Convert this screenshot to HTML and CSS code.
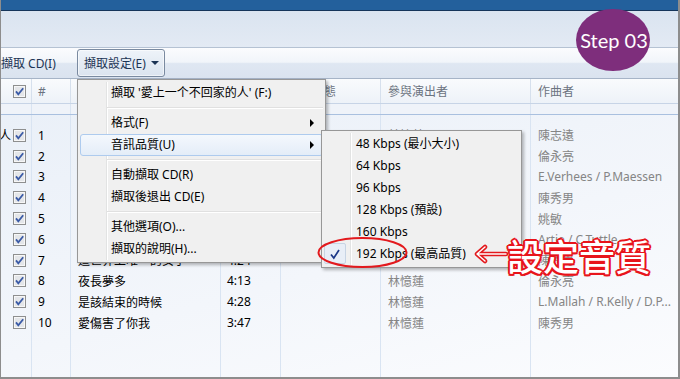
FILE: index.html
```html
<!DOCTYPE html>
<html lang="zh-Hant">
<head>
<meta charset="utf-8">
<title>擷取設定</title>
<link rel="stylesheet" href="styles.css">
</head>
<body>
<div class="app">
  <div class="titlebar"></div>
  <div class="band"></div>
  <div class="toolbar">
    <span class="tb-item">擷取 CD(I)</span>
    <span class="tb-btn"><span>擷取設定(E)</span><span class="caret"></span></span>
  </div>
  <div class="list">
    <div class="row head">
      <div class="c c0"></div>
      <div class="c c1"><svg class="cb" viewBox="0 0 13 13" width="13" height="13"><rect x="0.5" y="0.5" width="12" height="12" fill="#f7f7f7" stroke="#8e8f8f"/><rect x="2" y="2" width="9" height="9" fill="#e4e6e9"/><path d="M3 6.4 L5.3 9.3 L10.2 3.2" fill="none" stroke="#3a5aa6" stroke-width="1.8"/></svg></div>
      <div class="c c2">#</div>
      <div class="c c3">標題</div>
      <div class="c c4">長度</div>
      <div class="c c5">擷取狀態</div>
      <div class="c c6">參與演出者</div>
      <div class="c c7">作曲者</div>
    </div>
    <div class="subhead"></div>
    <div class="body">
      <div class="row"><div class="c c0"><span class="album">人</span></div><div class="c c1"><svg class="cb" viewBox="0 0 13 13" width="13" height="13"><rect x="0.5" y="0.5" width="12" height="12" fill="#f7f7f7" stroke="#8e8f8f"/><rect x="2" y="2" width="9" height="9" fill="#e4e6e9"/><path d="M3 6.4 L5.3 9.3 L10.2 3.2" fill="none" stroke="#3a5aa6" stroke-width="1.8"/></svg></div><div class="c c2">1</div><div class="c c3">愛上一個不回家的人</div><div class="c c4">4:31</div><div class="c c5"></div><div class="c c6 dim">林憶蓮</div><div class="c c7 dim">陳志遠</div></div>
      <div class="row"><div class="c c0"></div><div class="c c1"><svg class="cb" viewBox="0 0 13 13" width="13" height="13"><rect x="0.5" y="0.5" width="12" height="12" fill="#f7f7f7" stroke="#8e8f8f"/><rect x="2" y="2" width="9" height="9" fill="#e4e6e9"/><path d="M3 6.4 L5.3 9.3 L10.2 3.2" fill="none" stroke="#3a5aa6" stroke-width="1.8"/></svg></div><div class="c c2">2</div><div class="c c3">不必在乎我是誰</div><div class="c c4">4:05</div><div class="c c5"></div><div class="c c6 dim">林憶蓮</div><div class="c c7 dim">倫永亮</div></div>
      <div class="row"><div class="c c0"></div><div class="c c1"><svg class="cb" viewBox="0 0 13 13" width="13" height="13"><rect x="0.5" y="0.5" width="12" height="12" fill="#f7f7f7" stroke="#8e8f8f"/><rect x="2" y="2" width="9" height="9" fill="#e4e6e9"/><path d="M3 6.4 L5.3 9.3 L10.2 3.2" fill="none" stroke="#3a5aa6" stroke-width="1.8"/></svg></div><div class="c c2">3</div><div class="c c3">灰色</div><div class="c c4">4:12</div><div class="c c5"></div><div class="c c6 dim">林憶蓮</div><div class="c c7 dim">E.Verhees / P.Maessen</div></div>
      <div class="row"><div class="c c0"></div><div class="c c1"><svg class="cb" viewBox="0 0 13 13" width="13" height="13"><rect x="0.5" y="0.5" width="12" height="12" fill="#f7f7f7" stroke="#8e8f8f"/><rect x="2" y="2" width="9" height="9" fill="#e4e6e9"/><path d="M3 6.4 L5.3 9.3 L10.2 3.2" fill="none" stroke="#3a5aa6" stroke-width="1.8"/></svg></div><div class="c c2">4</div><div class="c c3">為你我受冷風吹</div><div class="c c4">4:40</div><div class="c c5"></div><div class="c c6 dim">林憶蓮</div><div class="c c7 dim">陳秀男</div></div>
      <div class="row"><div class="c c0"></div><div class="c c1"><svg class="cb" viewBox="0 0 13 13" width="13" height="13"><rect x="0.5" y="0.5" width="12" height="12" fill="#f7f7f7" stroke="#8e8f8f"/><rect x="2" y="2" width="9" height="9" fill="#e4e6e9"/><path d="M3 6.4 L5.3 9.3 L10.2 3.2" fill="none" stroke="#3a5aa6" stroke-width="1.8"/></svg></div><div class="c c2">5</div><div class="c c3">不了情</div><div class="c c4">3:58</div><div class="c c5"></div><div class="c c6 dim">林憶蓮</div><div class="c c7 dim">姚敏</div></div>
      <div class="row"><div class="c c0"></div><div class="c c1"><svg class="cb" viewBox="0 0 13 13" width="13" height="13"><rect x="0.5" y="0.5" width="12" height="12" fill="#f7f7f7" stroke="#8e8f8f"/><rect x="2" y="2" width="9" height="9" fill="#e4e6e9"/><path d="M3 6.4 L5.3 9.3 L10.2 3.2" fill="none" stroke="#3a5aa6" stroke-width="1.8"/></svg></div><div class="c c2">6</div><div class="c c3">如果你有一點點愛我</div><div class="c c4">4:19</div><div class="c c5"></div><div class="c c6 dim">林憶蓮</div><div class="c c7 dim">Artie / C.Tuttle</div></div>
      <div class="row"><div class="c c0"></div><div class="c c1"><svg class="cb" viewBox="0 0 13 13" width="13" height="13"><rect x="0.5" y="0.5" width="12" height="12" fill="#f7f7f7" stroke="#8e8f8f"/><rect x="2" y="2" width="9" height="9" fill="#e4e6e9"/><path d="M3 6.4 L5.3 9.3 L10.2 3.2" fill="none" stroke="#3a5aa6" stroke-width="1.8"/></svg></div><div class="c c2">7</div><div class="c c3">這世界上唯一的女子</div><div class="c c4">4:24</div><div class="c c5"></div><div class="c c6 dim">林憶蓮</div><div class="c c7 dim">陳秀男</div></div>
      <div class="row"><div class="c c0"></div><div class="c c1"><svg class="cb" viewBox="0 0 13 13" width="13" height="13"><rect x="0.5" y="0.5" width="12" height="12" fill="#f7f7f7" stroke="#8e8f8f"/><rect x="2" y="2" width="9" height="9" fill="#e4e6e9"/><path d="M3 6.4 L5.3 9.3 L10.2 3.2" fill="none" stroke="#3a5aa6" stroke-width="1.8"/></svg></div><div class="c c2">8</div><div class="c c3">夜長夢多</div><div class="c c4">4:13</div><div class="c c5"></div><div class="c c6 dim">林憶蓮</div><div class="c c7 dim">倫永亮</div></div>
      <div class="row"><div class="c c0"></div><div class="c c1"><svg class="cb" viewBox="0 0 13 13" width="13" height="13"><rect x="0.5" y="0.5" width="12" height="12" fill="#f7f7f7" stroke="#8e8f8f"/><rect x="2" y="2" width="9" height="9" fill="#e4e6e9"/><path d="M3 6.4 L5.3 9.3 L10.2 3.2" fill="none" stroke="#3a5aa6" stroke-width="1.8"/></svg></div><div class="c c2">9</div><div class="c c3">是該結束的時候</div><div class="c c4">4:28</div><div class="c c5"></div><div class="c c6 dim">林憶蓮</div><div class="c c7 dim">L.Mallah / R.Kelly / D.P...</div></div>
      <div class="row"><div class="c c0"></div><div class="c c1"><svg class="cb" viewBox="0 0 13 13" width="13" height="13"><rect x="0.5" y="0.5" width="12" height="12" fill="#f7f7f7" stroke="#8e8f8f"/><rect x="2" y="2" width="9" height="9" fill="#e4e6e9"/><path d="M3 6.4 L5.3 9.3 L10.2 3.2" fill="none" stroke="#3a5aa6" stroke-width="1.8"/></svg></div><div class="c c2">10</div><div class="c c3">愛傷害了你我</div><div class="c c4">3:47</div><div class="c c5"></div><div class="c c6 dim">林憶蓮</div><div class="c c7 dim">陳秀男</div></div>
    </div>
  </div>

  <div class="step">Step 03</div>

  <div class="menu main-menu">
    <div class="mi">擷取 '愛上一个不回家的人' (F:)</div>
    <div class="sep"></div>
    <div class="mi sub">格式(F)</div>
    <div class="mi sub hot">音訊品質(U)</div>
    <div class="sep"></div>
    <div class="mi">自動擷取 CD(R)</div>
    <div class="mi">擷取後退出 CD(E)</div>
    <div class="sep"></div>
    <div class="mi">其他選項(O)...</div>
    <div class="mi">擷取的說明(H)...</div>
  </div>

  <div class="menu sub-menu">
    <div class="mi">48 Kbps (最小大小)</div>
    <div class="mi">64 Kbps</div>
    <div class="mi">96 Kbps</div>
    <div class="mi">128 Kbps (預設)</div>
    <div class="mi">160 Kbps</div>
    <div class="mi checked"><span class="chk"><svg viewBox="0 0 20 18" width="20" height="18"><path d="M6 9.5 L8.8 13 L14 5" fill="none" stroke="#1b3787" stroke-width="1.7"/></svg></span>192 Kbps (最高品質)</div>
  </div>

  <svg class="mark" width="200" height="46" viewBox="0 0 200 46">
    <ellipse cx="50.5" cy="22.5" rx="44" ry="14.5" fill="none" stroke="#e3191d" stroke-width="2"/>
    <g fill="none" stroke-linecap="round" stroke-linejoin="round">
      <path d="M165 24 H194 M165 24 L173 17 M165 24 L173 31" stroke="#e3191d" stroke-width="4.5"/>
      <path d="M165 24 H194 M165 24 L173 17 M165 24 L173 31" stroke="#ffffff" stroke-width="1.4"/>
    </g>
  </svg>
  <div class="note">設定音質</div>
</div>
</body>
</html>
```

FILE: styles.css
```css
* { box-sizing: border-box; }

body {
  margin: 0;
  font-family: "Noto Sans", "Noto Sans CJK TC", sans-serif;
  font-size: 12px;
  color: #000;
}

.app {
  position: relative;
  width: 680px;
  height: 379px;
  overflow: hidden;
  display: flex;
  flex-direction: column;
  border-left: 1px solid #8d8d8d;
  border-right: 2px solid #8d8d8d;
  border-bottom: 2px solid #8d8d8d;
  background: #f1f5fa;
}

.titlebar {
  flex: none;
  height: 11px;
  margin: 0 -2px 0 -1px;
  background: #23609c;
  border-bottom: 1px solid #15355a;
}

.band {
  flex: none;
  height: 37px;
  background: linear-gradient(#dae4f0, #e3eaf4);
  border-bottom: 1px solid #b5c2d3;
}

.toolbar {
  flex: none;
  height: 31px;
  display: flex;
  align-items: center;
  padding-left: 0;
  background: linear-gradient(#fbfcfe, #f1f5fa 47%, #dfe7f2 52%, #dae3ef);
  border-bottom: 1px solid #a6b4c7;
  color: #1c3454;
}

.tb-item { width: 76px; }

.tb-btn {
  width: 88px;
  height: 28px;
  display: flex;
  align-items: center;
  justify-content: space-between;
  padding: 0 5px 0 6px;
  border: 1px solid #7a8aa0;
  border-radius: 3px;
  background: linear-gradient(#eef3f9, #dbe4ef);
  box-shadow: inset 0 0 0 1px rgba(255, 255, 255, 0.55);
}

.caret {
  width: 0;
  height: 0;
  border-left: 4px solid transparent;
  border-right: 4px solid transparent;
  border-top: 4px solid #1c3454;
}

.list {
  flex: 1;
  display: flex;
  flex-direction: column;
}

.row {
  display: grid;
  grid-template-columns: 8px 23px 39px 150px 60px 100px 150px 1fr;
  height: 20.8px;
  align-items: center;
  white-space: nowrap;
}

.c { overflow: hidden; }
.c0 { overflow: visible; }
.c1 { padding-left: 4px; display: flex; align-items: center; }
.c2 { padding-left: 6px; }
.c3 { padding-left: 7px; }
.c4 { padding-left: 6px; }
.c5, .c6, .c7 { padding-left: 7px; }

.cb { display: block; }

.album { display: block; margin-left: -2px; }

.row.head {
  height: 25px;
  border-bottom: 1px solid #c7d4e6;
  background: linear-gradient(#f9fbfd, #edf2f8);
  color: #6b7380;
}

.row.head .c {
  height: 100%;
  display: flex;
  align-items: center;
  border-right: 1px solid #d6e0ed;
}
.row.head .c0 { border-right: none; }
.row.head .c7 { border-right: none; }

.subhead {
  flex: none;
  height: 11px;
  border-bottom: 1px solid #a9c0df;
  background:
    linear-gradient(#d9e4f2, #d9e4f2) 30px 0 / 1px 100% no-repeat,
    linear-gradient(#d9e4f2, #d9e4f2) 69px 0 / 1px 100% no-repeat,
    linear-gradient(#d9e4f2, #d9e4f2) 219px 0 / 1px 100% no-repeat,
    linear-gradient(#d9e4f2, #d9e4f2) 279px 0 / 1px 100% no-repeat,
    linear-gradient(#d9e4f2, #d9e4f2) 379px 0 / 1px 100% no-repeat,
    linear-gradient(#d9e4f2, #d9e4f2) 529px 0 / 1px 100% no-repeat,
    #eff3f9;
}

.body {
  flex: 1;
  padding-top: 10px;
  background:
    linear-gradient(#d9e4f2, #d9e4f2) 30px 0 / 1px 100% no-repeat,
    linear-gradient(#d9e4f2, #d9e4f2) 69px 0 / 1px 100% no-repeat,
    linear-gradient(#d9e4f2, #d9e4f2) 219px 0 / 1px 100% no-repeat,
    linear-gradient(#d9e4f2, #d9e4f2) 279px 0 / 1px 100% no-repeat,
    linear-gradient(#d9e4f2, #d9e4f2) 379px 0 / 1px 100% no-repeat,
    linear-gradient(#d9e4f2, #d9e4f2) 529px 0 / 1px 100% no-repeat,
    linear-gradient(165deg, #eaf0f8, #f3f6fb 55%, #fbfcfe);
}

.dim { color: #858585; }

/* Step badge */
.step {
  position: absolute;
  left: 575px;
  top: 9px;
  width: 74px;
  height: 62px;
  border-radius: 50%;
  background: #7e2e7c;
  color: #fff;
  font-family: "Lato", "DejaVu Sans", sans-serif;
  font-size: 20px;
  display: flex;
  align-items: center;
  justify-content: center;
  padding-left: 2px;
}

/* Menus */
.menu {
  position: absolute;
  background: #f0f0f0;
  border: 1px solid #979797;
  padding: 2px;
  box-shadow: 2px 2px 3px rgba(0, 0, 0, 0.28);
}

.menu::before {
  content: "";
  position: absolute;
  top: 2px;
  bottom: 2px;
  left: 28px;
  width: 1px;
  background: #e2e3e3;
  box-shadow: 1px 0 0 #fff;
}

.main-menu {
  left: 76px;
  top: 79px;
  width: 249px;
}

.sub-menu {
  left: 320px;
  top: 130px;
  width: 201px;
}

.mi {
  position: relative;
  height: 22px;
  line-height: 22px;
  padding-left: 31px;
  white-space: nowrap;
}

.sub-menu .mi { padding-left: 32px; }

.mi.sub::after {
  content: "";
  position: absolute;
  right: 9px;
  top: 7px;
  border-left: 4px solid #000;
  border-top: 4px solid transparent;
  border-bottom: 4px solid transparent;
}

.mi.hot {
  border: 1px solid #aecbee;
  border-radius: 3px;
  background: linear-gradient(#f4f8fd, #e4edf8);
  line-height: 20px;
  padding-left: 30px;
}
.mi.hot::after { right: 8px; top: 6px; }

.sep {
  position: relative;
  height: 8px;
}
.sep::after {
  content: "";
  position: absolute;
  left: 27px;
  right: 0;
  top: 3px;
  height: 1px;
  background: #e0e0e0;
  box-shadow: 0 1px 0 #fff;
}

.chk {
  position: absolute;
  left: 0;
  top: 0;
  width: 22px;
  height: 21px;
  border: 1px solid #c7d4e4;
  border-radius: 2px;
  background: #e8eef7;
  display: flex;
  align-items: center;
  justify-content: center;
}
.chk svg { display: block; }

/* Annotation */
.mark {
  position: absolute;
  left: 311px;
  top: 230px;
}

.note {
  position: absolute;
  left: 506px;
  top: 235px;
  font-family: "Noto Sans CJK TC", sans-serif;
  font-weight: 500;
  font-size: 36px;
  line-height: 40px;
  color: #fff;
  text-shadow:
    2px 0 0 #e8141b, -2px 0 0 #e8141b, 0 2px 0 #e8141b, 0 -2px 0 #e8141b,
    1.5px 1.5px 0 #e8141b, -1.5px 1.5px 0 #e8141b, 1.5px -1.5px 0 #e8141b, -1.5px -1.5px 0 #e8141b,
    1px 0 0 #e8141b, -1px 0 0 #e8141b, 0 1px 0 #e8141b, 0 -1px 0 #e8141b;
}
```
